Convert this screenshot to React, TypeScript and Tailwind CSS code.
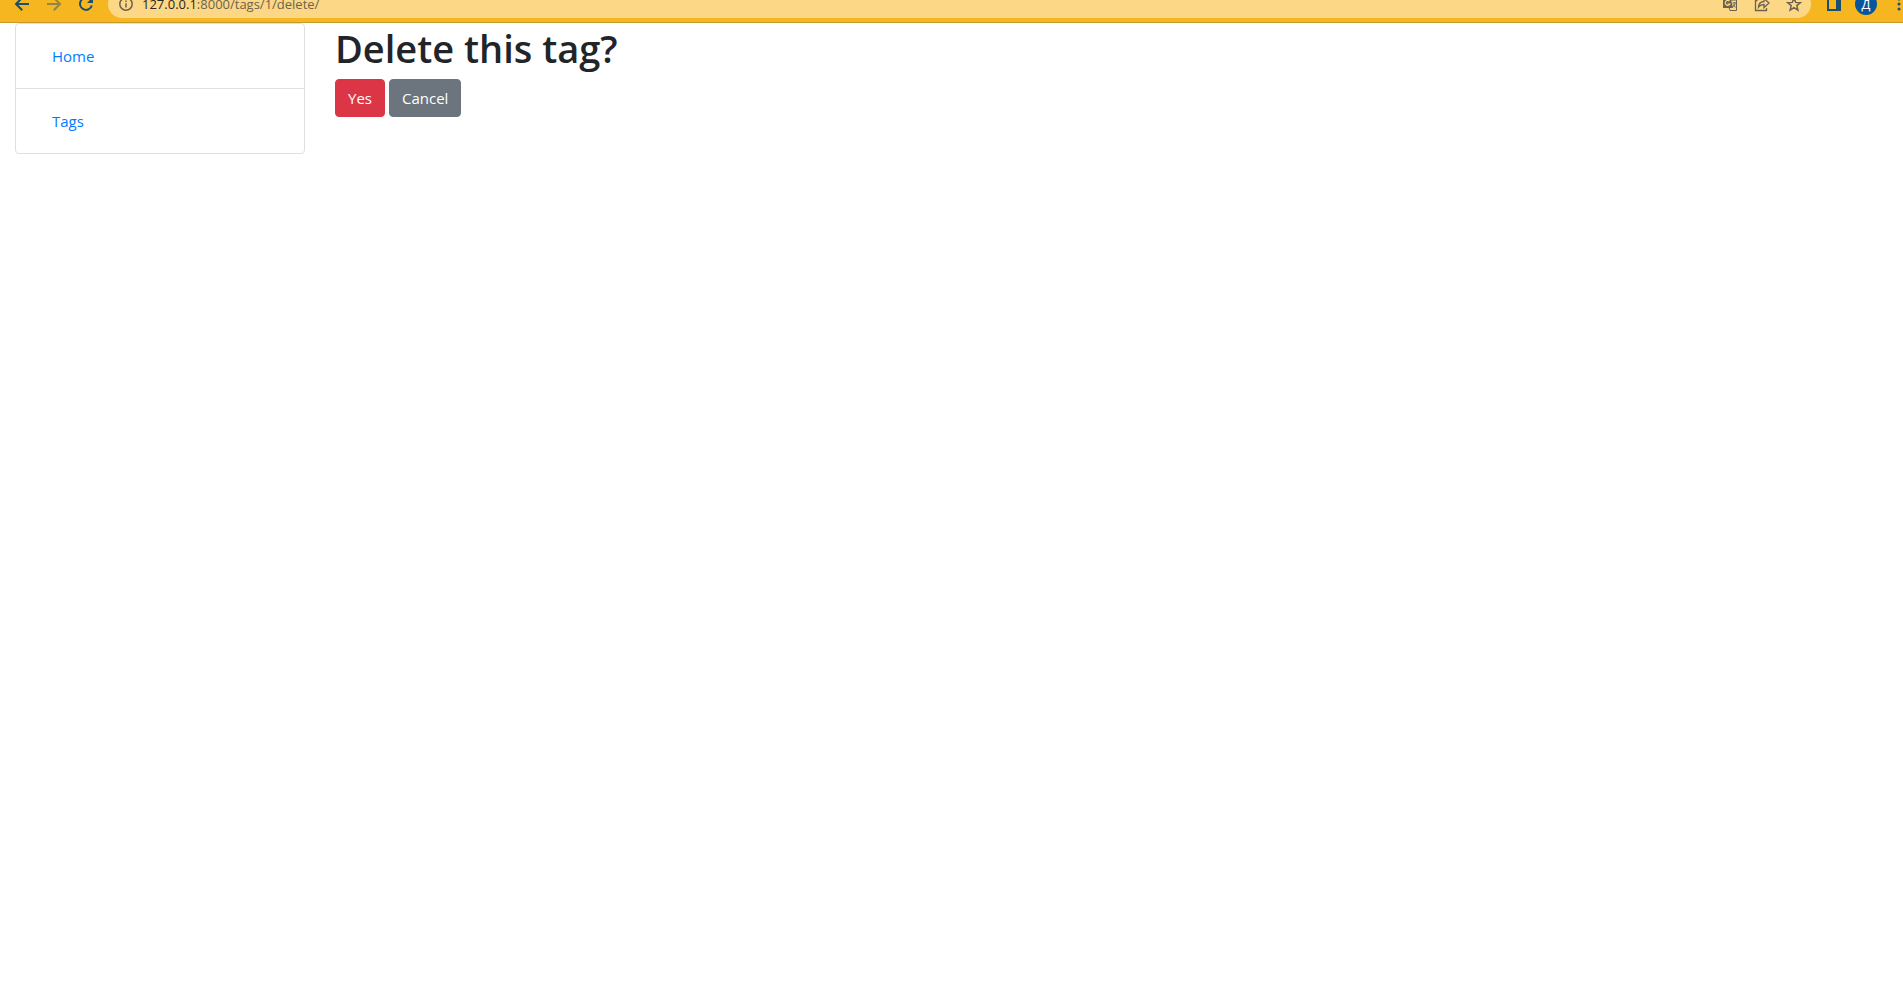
import React from "react";

const navItems = ["Home", "Tags"];

function BrowserBar() {
  return (
    <header className="flex h-[23px] items-end overflow-hidden border-b border-[#c79a2a] bg-[#f6b620] font-['Open_Sans','Noto_Sans',sans-serif]">
      <div className="flex h-9 w-full shrink-0 items-center">
        <div className="flex w-[108px] shrink-0 items-center gap-4 pl-[14px] text-[#1c4e70]">
          <button type="button" aria-label="Back" className="size-4">
            <svg viewBox="0 0 16 16" className="size-4" fill="none" stroke="currentColor" strokeWidth="2">
              <path d="M15 8H2.5M8.2 1.8 2 8l6.2 6.2" />
            </svg>
          </button>
          <button type="button" aria-label="Forward" className="size-4 opacity-45">
            <svg viewBox="0 0 16 16" className="size-4" fill="none" stroke="currentColor" strokeWidth="2">
              <path d="M1 8h12.5M7.8 1.8 14 8l-6.2 6.2" />
            </svg>
          </button>
          <button type="button" aria-label="Reload" className="size-4">
            <svg viewBox="0 0 16 16" className="size-4" fill="none" stroke="currentColor" strokeWidth="2">
              <path d="M13.8 9.5A6 6 0 1 1 12.6 4" />
              <path d="M15 1v6H9z" fill="currentColor" stroke="none" />
            </svg>
          </button>
        </div>
        <div className="flex h-7 min-w-0 flex-1 items-center rounded-full bg-[#fcd785] pr-[9px] pl-[11px] text-[#6b6350]">
          <svg viewBox="0 0 14 14" className="size-[14px] shrink-0" fill="none" stroke="currentColor" strokeWidth="1.5">
            <circle cx="7" cy="7" r="6.2" />
            <path d="M7 6.2v4.3M7 3.4v1.5" />
          </svg>
          <p className="min-w-0 flex-1 truncate pl-[9px] text-[13px] leading-5">
            <span className="text-[#2b2622]">127.0.0.1</span>:8000/tags/1/delete/
          </p>
          <div className="flex shrink-0 items-center gap-4">
            <button type="button" aria-label="Translate" className="size-4">
              <svg viewBox="0 0 16 16" className="size-4" fill="none" stroke="currentColor">
                <path d="M1 1h7.5l2.5 11H1z" fill="currentColor" stroke="none" />
                <path d="M9 4h5.5v10.5H8l-1-3" />
                <path d="M7.5 5A2.5 2.5 0 1 0 8 8H5.5" stroke="#fcd785" strokeWidth="1.2" />
                <path d="M10.5 7h3.5M12.5 6v1M13.5 7.5l-3 4M11.5 8.5l2 3" />
              </svg>
            </button>
            <button type="button" aria-label="Share" className="size-4">
              <svg viewBox="0 0 16 16" className="size-4" fill="none" stroke="currentColor" strokeWidth="1.3">
                <path d="M3.500 4.500h-2v10h11V12" />
                <path d="M4.500 11c.4-4 2.500-5.500 5.500-5.500V2.500L15 7l-5 4.500v-3c-2.500 0-4.200.8-5.500 2.500z" />
              </svg>
            </button>
            <button type="button" aria-label="Bookmark" className="size-4">
              <svg viewBox="0 0 16 16" className="size-4" fill="none" stroke="currentColor" strokeWidth="1.5">
                <path d="m8 2.2 1.7 4.2 4.5.3-3.4 2.9 1.1 4.5L8 11.7l-3.9 2.4 1.1-4.5-3.4-2.9 4.5-.3z" />
              </svg>
            </button>
          </div>
        </div>
        <div className="flex w-[92px] shrink-0 items-center pl-4 text-[#1c4e70]">
          <button type="button" aria-label="Side panel" className="size-[14px]">
            <svg viewBox="0 0 14 14" className="size-[14px]" fill="none" stroke="currentColor" strokeWidth="2">
              <path d="M1 1h12v12H1z" />
              <path d="M9 0h5v14H9z" fill="currentColor" stroke="none" />
            </svg>
          </button>
          <button type="button" aria-label="Profile" className="ml-[14px] flex size-[22px] items-center justify-center rounded-full bg-[#07559b] text-[13px] leading-5 text-white">
            Д
          </button>
          <button type="button" aria-label="Menu" className="ml-5 h-4 w-1">
            <svg viewBox="0 0 4 16" className="h-4 w-1" fill="currentColor">
              <circle cx="2" cy="3" r="1.5" />
              <circle cx="2" cy="8" r="1.5" />
              <circle cx="2" cy="13" r="1.5" />
            </svg>
          </button>
        </div>
      </div>
    </header>
  );
}

export default function App() {
  return (
    <div className="min-h-screen bg-white font-['Open_Sans','Noto_Sans',sans-serif] text-[#212529]">
      <BrowserBar />
      <div className="flex">
        <nav className="w-80 shrink-0 px-[15px]">
          <ul className="divide-y divide-[#dfdfdf] rounded border border-[#dfdfdf]">
            {navItems.map((item) => (
              <li key={item} className="px-5 py-3">
                <a href="#" className="block px-4 py-2 text-[15px] leading-6 text-[#007bff]">
                  {item}
                </a>
              </li>
            ))}
          </ul>
        </nav>
        <main className="min-w-0 flex-1 px-[15px]">
          <h1 className="pt-px pb-[7px] text-[38px] leading-[48px] font-semibold">Delete this tag?</h1>
          <form className="flex gap-1" onSubmit={(e) => e.preventDefault()}>
            <button type="submit" className="rounded border border-[#dc3545] bg-[#dc3545] px-3 py-[6px] text-[15px] leading-6 text-white">
              Yes
            </button>
            <a href="#" className="rounded border border-[#6c757d] bg-[#6c757d] px-3 py-[6px] text-[15px] leading-6 text-white">
              Cancel
            </a>
          </form>
        </main>
      </div>
    </div>
  );
}
